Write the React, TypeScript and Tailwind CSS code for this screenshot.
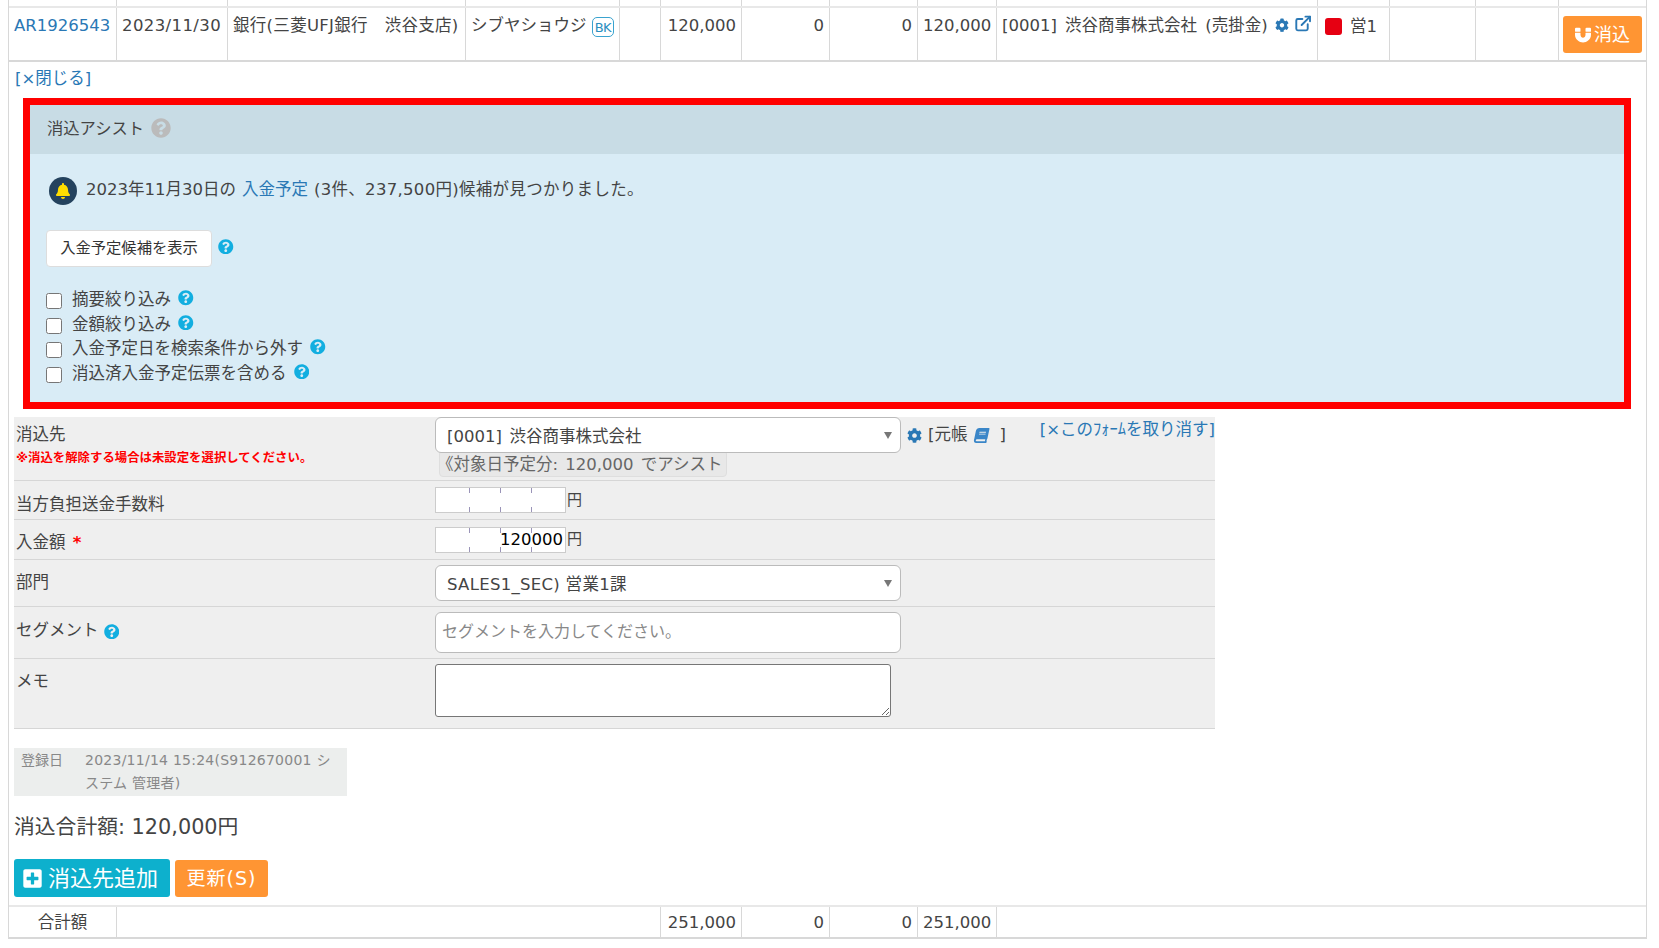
import { FaBell, FaBook, FaCog, FaMagnet, FaPlusSquare, FaQuestionCircle } from 'react-icons/fa'
import { FiExternalLink } from 'react-icons/fi'

const widths = [
  'w-[108px]', 'w-[111px]', 'w-[238px]', 'w-[154px]', 'w-[41px]', 'w-[81px]', 'w-[88px]',
  'w-[88px]', 'w-[79px]', 'w-[321px]', 'w-[72px]', 'w-[86px]', 'w-[83px]', 'w-[87px]',
]

function Help({ className }: { className?: string }) {
  return <FaQuestionCircle className={`inline-block text-[15.5px] text-[#12aee0] ${className ?? ''}`} />
}

function TopRow() {
  const cells = [
    <a className="text-[#2a78b5]">AR1926543</a>,
    <span className="tracking-[0.4px]">2023/11/30</span>,
    <span className="whitespace-nowrap tracking-[0.3px]">銀行(三菱UFJ銀行　渋谷支店)</span>,
    <span className="flex items-center whitespace-nowrap">
      シブヤショウジ
      <span className="ml-[5px] mt-[2px] flex h-[20px] w-[23px] items-center justify-center rounded-[5px] border border-[#3aa3cf] text-[13px] tracking-tighter text-[#2a8fc0]">
        BK
      </span>
    </span>,
    null,
    <span className="block text-right">120,000</span>,
    <span className="block text-right">0</span>,
    <span className="block text-right">0</span>,
    <span className="block text-right">120,000</span>,
    <span className="flex items-center whitespace-nowrap">
      <span className="[word-spacing:3px]">[0001] 渋谷商事株式会社 (売掛金)</span>
      <FaCog className="ml-[7px] mb-[2px] text-[14.5px] text-[#2a78b5]" />
      <FiExternalLink className="ml-[5px] mb-[5px] text-[19px] stroke-[2.5px] text-[#2a78b5]" />
    </span>,
    <span className="flex items-center">
      <span className="ml-[2px] mr-[8px] h-[17px] w-[17px] rounded-[3px] bg-[#e60012]" />
      <span className="mt-[1px]">営1</span>
    </span>,
    null,
    null,
    <button className="ml-[4px] mt-[2px] flex h-[37px] w-[79px] items-center justify-center rounded-[3px] bg-[#ff9533] text-[18px] text-white">
      <FaMagnet className="mr-[3px] text-[16px]" />
      消込
    </button>,
  ]
  return (
    <div className="flex h-[54px] border-b-2 border-[#d8d8d8]">
      {cells.map((c, i) => (
        <div
          key={i}
          className={`${widths[i]} shrink-0 pt-[6px] ${i === 0 ? 'pl-[5px]' : i === 13 ? '' : 'px-[5px]'} ${i < 13 ? 'border-r border-[#d8d8d8]' : ''}`}
        >
          {c}
        </div>
      ))}
    </div>
  )
}

function TopStrip() {
  return (
    <div className="flex h-[8px] border-b-2 border-[#e8e8e8]">
      {widths.map((w, i) => (
        <div key={i} className={`${w} shrink-0 ${i < 13 ? 'border-r border-[#d8d8d8]' : ''}`} />
      ))}
    </div>
  )
}

function Assist() {
  const filters = [
    '摘要絞り込み',
    '金額絞り込み',
    '入金予定日を検索条件から外す',
    '消込済入金予定伝票を含める',
  ]
  return (
    <div className="ml-[14px] mt-[7px] h-[311px] w-[1608px] border-[7px] border-[#ff0000] bg-[#d9ecf6]">
      <div className="flex h-[49px] items-center bg-[#c8dce5] pb-[1px] pl-[17px] text-[16.3px]">
        消込アシスト
        <FaQuestionCircle className="ml-[7px] mb-[3px] text-[20px] text-[#bbbbbb]" />
      </div>
      <div className="pl-[16px]">
        <div className="mt-[22px] flex h-[29px] items-center">
          <span className="ml-[3px] mr-[9px] flex h-[28px] w-[28px] items-center justify-center rounded-full bg-[#24425e]">
            <FaBell className="text-[16px] text-[#ffdd00]" />
          </span>
          2023年11月30日の
          <a className="mx-[6px] text-[#2a78b5]">入金予定</a>
          <span className="tracking-[0.3px]">(3件、237,500円)候補が見つかりました。</span>
        </div>
        <div className="mt-[25px] flex items-center">
          <button className="h-[37px] w-[166px] rounded-[4px] border border-[#dddddd] bg-white text-[15.3px] text-[#333]">
            入金予定候補を表示
          </button>
          <Help className="ml-[6px] mb-[4px]" />
        </div>
        <div className="mt-[21px] flex flex-col">
          {filters.map((f) => (
            <label key={f} className="flex h-[24.6px] items-center">
              <input type="checkbox" className="mt-[2px] mr-[10px] h-[16px] w-[16px]" />
              {f}
              <Help className="ml-[7px] mb-[5px]" />
            </label>
          ))}
        </div>
      </div>
    </div>
  )
}

function Arrow() {
  return <span className="ml-auto mr-[8px] h-0 w-0 border-x-[4px] border-t-[7px] border-x-transparent border-t-[#777]" />
}

function Ticks() {
  return (
    <>
      {['left-[33px]', 'left-[64px]', 'left-[95px]'].map((l) => (
        <span key={l}>
          <span className={`absolute top-0 h-[5px] w-px ${l} bg-[#9a94b8]`} />
          <span className={`absolute bottom-0 h-[5px] w-px ${l} bg-[#9a94b8]`} />
        </span>
      ))}
    </>
  )
}

function AmountInput({ value }: { value?: string }) {
  return (
    <div className="flex items-center">
      <div className="relative flex h-[26px] w-[131px] items-center justify-end border border-[#cccccc] bg-white pr-[2px] pt-[1px] text-black">
        <Ticks />
        <span className="relative">{value}</span>
      </div>
      <span className="ml-[1px] text-[15px]">円</span>
    </div>
  )
}

function FormRow({ label, className, children }: { label: React.ReactNode; className: string; children: React.ReactNode }) {
  return (
    <div className={`flex border-b-[1.5px] border-[#d6d6d6] ${className}`}>
      <div className="w-[421px] shrink-0 pl-[2px]">{label}</div>
      <div className="flex-1">{children}</div>
    </div>
  )
}

function AssistForm() {
  return (
    <div className="ml-[5px] mt-[8px] w-[1201px] bg-[#efefef]">
      <FormRow
        className="h-[64px]"
        label={
          <>
            <div className="mt-[6px] leading-[24px]">消込先</div>
            <div className="mt-[2px] text-[12.4px] font-bold leading-[18px] text-[#ff0000]">
              ※消込を解除する場合は未設定を選択してください。
            </div>
          </>
        }
      >
        <div className="flex">
          <div className="relative z-10 flex h-[36px] w-[466px] items-center rounded-[6px] border border-[#bbbbbb] bg-white pl-[11px] [word-spacing:2.5px]">
            <span className="pt-[4px]">[0001] 渋谷商事株式会社</span>
            <Arrow />
          </div>
          <div className="ml-[6px] mt-[8px] flex h-[20px] items-center whitespace-nowrap">
            <FaCog className="mr-[6px] text-[15px] text-[#2a78b5]" />
            [元帳
            <FaBook className="ml-[7px] -skew-x-12 text-[15px] text-[#3a86c8]" />
            <span className="ml-[10px]">]</span>
          </div>
          <a className="ml-auto mt-[3px] h-[20px] whitespace-nowrap text-[#2a78b5] leading-[20px]">
            [×このﾌｫｰﾑを取り消す]
          </a>
        </div>
        <div className="-mt-[3px] ml-[4px] flex h-[27px] w-[288px] items-center rounded-[4px] border border-[#dedede] bg-[#e8e8e8] pt-[3px] whitespace-nowrap text-[#666] [word-spacing:2px]">
          <span className="-ml-[3px]">《</span>対象日予定分: 120,000 でアシスト
        </div>
      </FormRow>
      <FormRow className="h-[39px] items-center" label={<div className="mt-[10px]">当方負担送金手数料</div>}>
        <AmountInput />
      </FormRow>
      <FormRow
        className="h-[40px] items-center"
        label={
          <div className="mt-[8px]">
            入金額 <span className="ml-[2px] font-bold text-[#ff0000]">*</span>
          </div>
        }
      >
        <AmountInput value="120000" />
      </FormRow>
      <FormRow className="h-[47px] items-center" label={<div>部門</div>}>
        <div className="flex h-[36px] w-[466px] items-center rounded-[6px] border border-[#bbbbbb] bg-white pl-[11px]">
          <span className="pt-[4px] tracking-[0.3px]">SALES1_SEC) 営業1課</span>
          <Arrow />
        </div>
      </FormRow>
      <FormRow
        className="h-[52px] items-center"
        label={
          <div className="mb-[2px] flex items-center">
            セグメント
            <Help className="ml-[5px]" />
          </div>
        }
      >
        <input
          placeholder="セグメントを入力してください。"
          className="h-[41px] w-[466px] rounded-[6px] border border-[#bbbbbb] bg-white pb-[2px] pl-[6px] text-[16px] placeholder:text-[#888]"
        />
      </FormRow>
      <FormRow className="h-[70px]" label={<div className="mt-[11px]">メモ</div>}>
        <textarea className="mt-[5px] block h-[53px] w-[456px] rounded-[3px] border border-[#767676] bg-white" />
      </FormRow>
    </div>
  )
}

function Footer() {
  return (
    <div className="ml-[5px]">
      <div className="mt-[19px] flex h-[48px] w-[333px] bg-[#eceeed] pl-[7px] pr-[6px] pt-[1px] text-[14px] leading-[22.5px] text-[#888]">
        <span className="w-[64px] shrink-0">登録日</span>
        <span className="tracking-[0.25px]">2023/11/14 15:24(S912670001 システム 管理者)</span>
      </div>
      <div className="mt-[17px] text-[20.8px] leading-[28px]">消込合計額: 120,000円</div>
      <div className="mt-[18px] flex items-end">
        <button className="flex h-[38px] w-[156px] items-center justify-center rounded-[3px] bg-[#0db0cd] pr-[4px] text-[22px] text-white">
          <FaPlusSquare className="mr-[5px] text-[21px]" />
          消込先追加
        </button>
        <button className="ml-[5px] h-[37px] w-[93px] rounded-[3px] bg-[#ff9533] text-[19px] tracking-[1px] text-white">更新(S)</button>
      </div>
    </div>
  )
}

function TotalRow() {
  const cols = [
    { w: 'w-[108px]', t: '合計額', c: 'text-center' },
    { w: 'w-[544px]', t: '', c: '' },
    { w: 'w-[81px]', t: '251,000', c: 'text-right' },
    { w: 'w-[88px]', t: '0', c: 'text-right' },
    { w: 'w-[88px]', t: '0', c: 'text-right' },
    { w: 'w-[79px]', t: '251,000', c: 'text-right' },
    { w: 'flex-1', t: '', c: '' },
  ]
  return (
    <div className="mt-[8px] flex h-[34px] items-stretch border-y-2 border-t-[#e8e8e8] border-b-[#d8d8d8]">
      {cols.map((c, i) => (
        <div key={i} className={`${c.w} shrink-0 px-[5px] leading-[32px] ${c.c} ${i < 6 ? 'border-r border-[#d8d8d8]' : ''}`}>
          {c.t}
        </div>
      ))}
    </div>
  )
}

export default function App() {
  return (
    <div className="h-[948px] w-[1659px] overflow-hidden bg-white font-['DejaVu_Sans','Noto_Sans_CJK_JP',sans-serif] text-[16.5px] text-[#444]">
      <div className="ml-[8px] h-[939px] w-[1639px] border-x border-[#d8d8d8]">
        <TopStrip />
        <TopRow />
        <a className="ml-[6px] mt-[5px] block leading-[24px] text-[#2a78b5]">[×閉じる]</a>
        <Assist />
        <AssistForm />
        <Footer />
        <TotalRow />
      </div>
    </div>
  )
}
